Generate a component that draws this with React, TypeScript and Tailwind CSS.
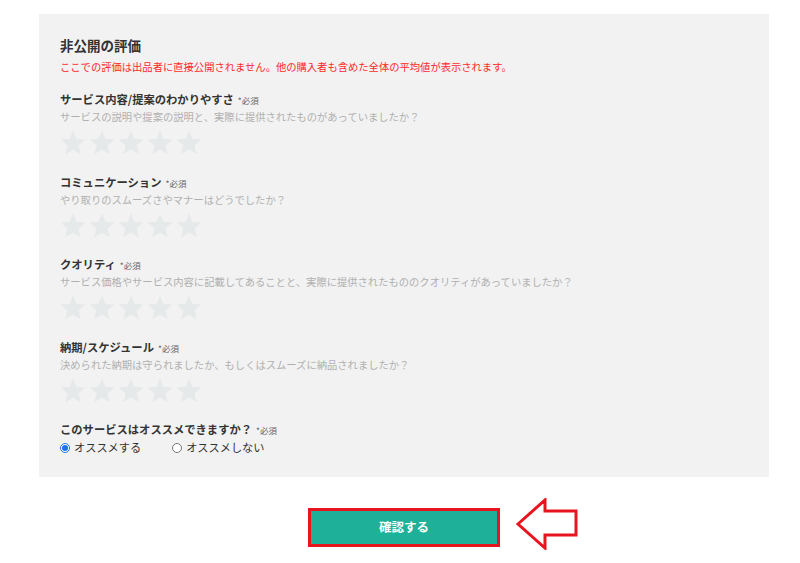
import React from "react";

const font = { fontFamily: '"Noto Sans CJK JP", "Noto Sans", sans-serif' };

function Star() {
  return (
    <svg width="26" height="25" viewBox="0 0 24 23">
      <polygon
        points="12,0.5 15.1,8.1 23.5,8.7 17.1,14.2 19.2,22.5 12,18 4.8,22.5 6.9,14.2 0.5,8.7 8.9,8.1"
        fill="#e6e9ea"
      />
    </svg>
  );
}

function Stars() {
  return (
    <div className="flex gap-[3px] mt-[6px] h-[25px]">
      <Star />
      <Star />
      <Star />
      <Star />
      <Star />
    </div>
  );
}

function Label({ text }: { text: string }) {
  return (
    <div className="flex items-baseline h-[16px] leading-[16px]">
      <span className="text-[11.3px] font-bold text-[#333]">{text}</span>
      <span className="text-[8.5px] text-[#666] ml-[4px]">*必須</span>
    </div>
  );
}

function Section({ title, desc, first }: { title: string; desc: string; first?: boolean }) {
  return (
    <div className={first ? "mt-[17px]" : "mt-[18.5px]"}>
      <Label text={title} />
      <div className="mt-[3px] text-[10.3px] leading-[14px] h-[14px] text-[#b0b0b0] whitespace-nowrap">{desc}</div>
      <Stars />
    </div>
  );
}

export default function App() {
  return (
    <div className="w-[800px] h-[563px] bg-white overflow-hidden" style={font}>
      <div className="pt-[14px] pl-[39px]">
        <div className="w-[730px] h-[463px] bg-[#f2f2f2] pl-[21px] pt-[22px]">
          <div className="text-[13.5px] font-bold leading-[18px] h-[18px] text-[#333]">非公開の評価</div>
          <div className="mt-[6px] text-[10.3px] leading-[14px] h-[14px] text-[#ff2a2a] whitespace-nowrap">
            ここでの評価は出品者に直接公開されません。他の購入者も含めた全体の平均値が表示されます。
          </div>
          <Section
            first
            title="サービス内容/提案のわかりやすさ"
            desc="サービスの説明や提案の説明と、実際に提供されたものがあっていましたか？"
          />
          <Section title="コミュニケーション" desc="やり取りのスムーズさやマナーはどうでしたか？" />
          <Section
            title="クオリティ"
            desc="サービス価格やサービス内容に記載してあることと、実際に提供されたもののクオリティがあっていましたか？"
          />
          <Section
            title="納期/スケジュール"
            desc="決められた納期は守られましたか、もしくはスムーズに納品されましたか？"
          />
          <div className="mt-[18px]">
            <Label text="このサービスはオススメできますか？" />
            <div className="mt-[3px] flex items-center h-[16px] text-[11.2px] text-[#333]">
              <span className="w-[10px] h-[10px] rounded-full border border-[#1a73e8] bg-white flex items-center justify-center">
                <span className="w-[6px] h-[6px] rounded-full bg-[#1a73e8]" />
              </span>
              <span className="ml-[4px]">オススメする</span>
              <span className="ml-[31px] w-[10px] h-[10px] rounded-full border border-[#777] bg-white" />
              <span className="ml-[4px]">オススメしない</span>
            </div>
          </div>
        </div>
        <div className="relative w-[730px] mt-[31px] flex justify-center">
          <div className="w-[192px] h-[39px] border-[3px] border-[#e8141e] bg-[#1fb099] flex items-center justify-center text-white text-[12.5px] font-bold">
            確認する
          </div>
          <svg
            className="absolute left-[477px] top-[-10px]"
            width="64"
            height="52"
            viewBox="0 0 64 52"
          >
            <polygon
              points="2,26 29,2 29,13 60,13 60,37 29,37 29,50"
              fill="white"
              stroke="#e8141e"
              strokeWidth="3"
              strokeLinejoin="miter"
            />
          </svg>
        </div>
      </div>
    </div>
  );
}
